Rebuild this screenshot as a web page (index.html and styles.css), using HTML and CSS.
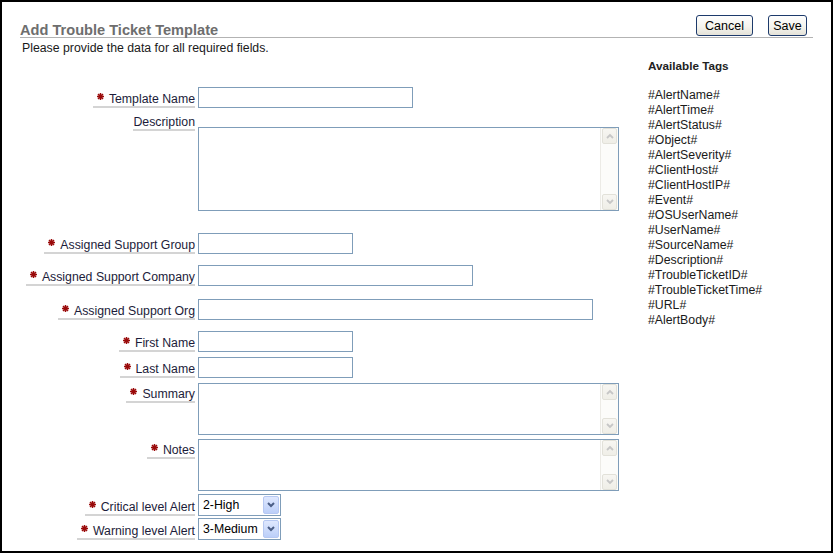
FILE: index.html
```html
<!DOCTYPE html>
<html lang="en">
<head>
<meta charset="utf-8">
<title>Add Trouble Ticket Template</title>
<link rel="stylesheet" href="styles.css">
</head>
<body>
<div class="frame">
  <div class="header">
    <h1 class="title">Add Trouble Ticket Template</h1>
    <div class="actions">
      <button class="btn btn-cancel" type="button">Cancel</button>
      <button class="btn btn-save" type="button">Save</button>
    </div>
  </div>
  <p class="intro">Please provide the data for all required fields.</p>
  <div class="body">
    <form class="form">
      <div class="row r1">
        <div class="lab-cell"><span class="lab"><span class="req"><svg class="star" width="7" height="7" viewBox="0 0 7 7"><path d="M3.5 0V7M0 3.5H7M1 1L6 6M6 1L1 6"/></svg></span>Template Name</span></div>
        <input class="field w215" type="text">
      </div>
      <div class="row row-top r2">
        <div class="lab-cell"><span class="lab">Description</span></div>
        <div class="ta ta-desc">
          <textarea></textarea>
          <div class="sb">
            <span class="sb-btn"><svg width="8" height="6" viewBox="0 0 8 6"><polyline points="1,5 4,2 7,5"/></svg></span>
            <span class="sb-btn"><svg width="8" height="6" viewBox="0 0 8 6"><polyline points="1,1 4,4 7,1"/></svg></span>
          </div>
        </div>
      </div>
      <div class="row r3">
        <div class="lab-cell"><span class="lab"><span class="req"><svg class="star" width="7" height="7" viewBox="0 0 7 7"><path d="M3.5 0V7M0 3.5H7M1 1L6 6M6 1L1 6"/></svg></span>Assigned Support Group</span></div>
        <input class="field w155" type="text">
      </div>
      <div class="row r4">
        <div class="lab-cell"><span class="lab"><span class="req"><svg class="star" width="7" height="7" viewBox="0 0 7 7"><path d="M3.5 0V7M0 3.5H7M1 1L6 6M6 1L1 6"/></svg></span>Assigned Support Company</span></div>
        <input class="field w275" type="text">
      </div>
      <div class="row r5">
        <div class="lab-cell"><span class="lab"><span class="req"><svg class="star" width="7" height="7" viewBox="0 0 7 7"><path d="M3.5 0V7M0 3.5H7M1 1L6 6M6 1L1 6"/></svg></span>Assigned Support Org</span></div>
        <input class="field w395" type="text">
      </div>
      <div class="row r6">
        <div class="lab-cell"><span class="lab"><span class="req"><svg class="star" width="7" height="7" viewBox="0 0 7 7"><path d="M3.5 0V7M0 3.5H7M1 1L6 6M6 1L1 6"/></svg></span>First Name</span></div>
        <input class="field w155" type="text">
      </div>
      <div class="row r7">
        <div class="lab-cell"><span class="lab"><span class="req"><svg class="star" width="7" height="7" viewBox="0 0 7 7"><path d="M3.5 0V7M0 3.5H7M1 1L6 6M6 1L1 6"/></svg></span>Last Name</span></div>
        <input class="field w155" type="text">
      </div>
      <div class="row row-top r8">
        <div class="lab-cell lab-low"><span class="lab"><span class="req"><svg class="star" width="7" height="7" viewBox="0 0 7 7"><path d="M3.5 0V7M0 3.5H7M1 1L6 6M6 1L1 6"/></svg></span>Summary</span></div>
        <div class="ta ta-small">
          <textarea></textarea>
          <div class="sb">
            <span class="sb-btn"><svg width="8" height="6" viewBox="0 0 8 6"><polyline points="1,5 4,2 7,5"/></svg></span>
            <span class="sb-btn"><svg width="8" height="6" viewBox="0 0 8 6"><polyline points="1,1 4,4 7,1"/></svg></span>
          </div>
        </div>
      </div>
      <div class="row row-top r9">
        <div class="lab-cell lab-low"><span class="lab"><span class="req"><svg class="star" width="7" height="7" viewBox="0 0 7 7"><path d="M3.5 0V7M0 3.5H7M1 1L6 6M6 1L1 6"/></svg></span>Notes</span></div>
        <div class="ta ta-small">
          <textarea></textarea>
          <div class="sb">
            <span class="sb-btn"><svg width="8" height="6" viewBox="0 0 8 6"><polyline points="1,5 4,2 7,5"/></svg></span>
            <span class="sb-btn"><svg width="8" height="6" viewBox="0 0 8 6"><polyline points="1,1 4,4 7,1"/></svg></span>
          </div>
        </div>
      </div>
      <div class="row r10">
        <div class="lab-cell"><span class="lab"><span class="req"><svg class="star" width="7" height="7" viewBox="0 0 7 7"><path d="M3.5 0V7M0 3.5H7M1 1L6 6M6 1L1 6"/></svg></span>Critical level Alert</span></div>
        <div class="select">
          <select><option>2-High</option><option>1-Critical</option><option>3-Medium</option><option>4-Low</option></select>
          <span class="select-btn"><svg width="8" height="6" viewBox="0 0 8 6"><polyline points="1,1 4,4 7,1"/></svg></span>
        </div>
      </div>
      <div class="row r11">
        <div class="lab-cell"><span class="lab"><span class="req"><svg class="star" width="7" height="7" viewBox="0 0 7 7"><path d="M3.5 0V7M0 3.5H7M1 1L6 6M6 1L1 6"/></svg></span>Warning level Alert</span></div>
        <div class="select">
          <select><option>3-Medium</option><option>1-Critical</option><option>2-High</option><option>4-Low</option></select>
          <span class="select-btn"><svg width="8" height="6" viewBox="0 0 8 6"><polyline points="1,1 4,4 7,1"/></svg></span>
        </div>
      </div>
    </form>
    <aside class="tags">
      <h2 class="tags-title">Available Tags</h2>
      <ul class="tags-list">
        <li>#AlertName#</li>
        <li>#AlertTime#</li>
        <li>#AlertStatus#</li>
        <li>#Object#</li>
        <li>#AlertSeverity#</li>
        <li>#ClientHost#</li>
        <li>#ClientHostIP#</li>
        <li>#Event#</li>
        <li>#OSUserName#</li>
        <li>#UserName#</li>
        <li>#SourceName#</li>
        <li>#Description#</li>
        <li>#TroubleTicketID#</li>
        <li>#TroubleTicketTime#</li>
        <li>#URL#</li>
        <li>#AlertBody#</li>
      </ul>
    </aside>
  </div>
</div>
</body>
</html>
```

FILE: styles.css
```css
html, body {
  margin: 0;
  padding: 0;
  background: #fff;
}

body {
  font-family: "Liberation Sans", Arial, sans-serif;
  font-size: 12.3px;
  color: #222;
}

.frame {
  width: 833px;
  height: 553px;
  box-sizing: border-box;
  border: 2px solid #000;
  padding: 0 18px;
  overflow: hidden;
  background: #fff;
}

/* Header */
.header {
  margin-top: 13px;
  display: flex;
  justify-content: space-between;
  align-items: flex-end;
  border-bottom: 1px solid #b3b3b3;
}

.title {
  margin: 0;
  font-size: 14.6px;
  line-height: 14px;
  font-weight: bold;
  color: #6e6e6e;
}

.actions {
  display: flex;
  gap: 15px;
  margin: 0 6px 1px 0;
}

.btn {
  height: 21px;
  box-sizing: border-box;
  border: 1px solid #1d3a6b;
  border-radius: 3px;
  background: linear-gradient(#fefefe 0%, #f5f4ee 55%, #e4e2d8 100%);
  font-family: "Liberation Sans", Arial, sans-serif;
  font-size: 12.5px;
  color: #000;
  padding: 0;
}

.btn-cancel { width: 57px; }
.btn-save { width: 39px; }

.intro {
  margin: 3px 0 0 2px;
  line-height: 15px;
  color: #1a1a1a;
}

/* Body */
.body {
  display: flex;
}

.form {
  width: 628px;
  flex: none;
  padding-top: 31px;
}

.row {
  display: flex;
  align-items: flex-end;
  gap: 3px;
}

.row-top {
  align-items: flex-start;
}

.r2 { margin-top: 7px; }
.r3 { margin-top: 22px; }
.r4 { margin-top: 11px; }
.r5 { margin-top: 13px; }
.r6 { margin-top: 11px; }
.r7 { margin-top: 5px; }
.r8 { margin-top: 5px; }
.r9 { margin-top: 4px; }
.r10 { margin-top: 3px; }
.r11 { margin-top: 2px; }

.lab-cell {
  width: 175px;
  flex: none;
  display: flex;
  justify-content: flex-end;
}

.lab-low {
  margin-top: 3.5px;
}

.lab {
  line-height: 14px;
  border-bottom: 2px solid #d4d4d4;
  color: #1c1c3a;
  white-space: nowrap;
}

.req {
  padding-left: 4px;
  margin-right: 5px;
}

.star {
  display: inline-block;
  vertical-align: 3px;
}

.star path {
  stroke: #9a0a0a;
  stroke-width: 1.5;
  fill: none;
}

.field {
  height: 21px;
  box-sizing: border-box;
  border: 1px solid #7f9db9;
  padding: 1px 3px;
  margin: 0;
  font-family: inherit;
  font-size: inherit;
  background: #fff;
  outline: none;
}

.w155 { width: 155px; }
.w215 { width: 215px; }
.w275 { width: 275px; }
.w395 { width: 395px; }

/* Textarea with classic scrollbar */
.ta {
  display: flex;
  width: 421px;
  box-sizing: border-box;
  border: 1px solid #7f9db9;
  background: #fff;
}

.ta-desc {
  height: 84px;
  margin-top: 12px;
}

.ta-small {
  height: 52px;
}

.ta textarea {
  flex: 1;
  min-width: 0;
  border: 0;
  margin: 0;
  padding: 2px;
  resize: none;
  outline: none;
  font-family: inherit;
  font-size: inherit;
  background: #fff;
}

.sb {
  width: 18px;
  flex: none;
  box-sizing: border-box;
  display: flex;
  flex-direction: column;
  justify-content: space-between;
  border-left: 1px solid #ecebe6;
  background: #fcfcfa;
  padding: 0 1px 0 1px;
}

.sb-btn {
  height: 16px;
  box-sizing: border-box;
  border: 1px solid #e2e1d9;
  border-radius: 2px;
  background: linear-gradient(#f7f6f2, #efeee7);
  display: flex;
  align-items: center;
  justify-content: center;
}

.sb-btn polyline {
  fill: none;
  stroke: #c6c6c6;
  stroke-width: 1.8;
}

/* Select */
.select {
  display: flex;
  width: 83px;
  height: 22px;
  box-sizing: border-box;
  border: 1px solid #7f9db9;
  padding: 1px;
  background: #fff;
}

.select select {
  flex: 1;
  min-width: 0;
  appearance: none;
  -webkit-appearance: none;
  border: 0;
  background: transparent;
  font-family: inherit;
  font-size: inherit;
  color: #000;
  padding: 0 0 0 3px;
  margin: 0;
  outline: none;
}

.select-btn {
  width: 16px;
  flex: none;
  box-sizing: border-box;
  border: 1px solid #b6c8f2;
  border-radius: 2px;
  background: linear-gradient(#dfe8fe, #bccff9);
  display: flex;
  align-items: center;
  justify-content: center;
}

.select-btn polyline {
  fill: none;
  stroke: #4b5e86;
  stroke-width: 2;
}

/* Tags */
.tags {
  padding-top: 2px;
}

.tags-title {
  margin: 0;
  font-size: 11.7px;
  line-height: 15px;
  font-weight: bold;
  color: #222;
}

.tags-list {
  list-style: none;
  margin: 15px 0 0;
  padding: 0;
  line-height: 15px;
  color: #1a1a1a;
}
```
